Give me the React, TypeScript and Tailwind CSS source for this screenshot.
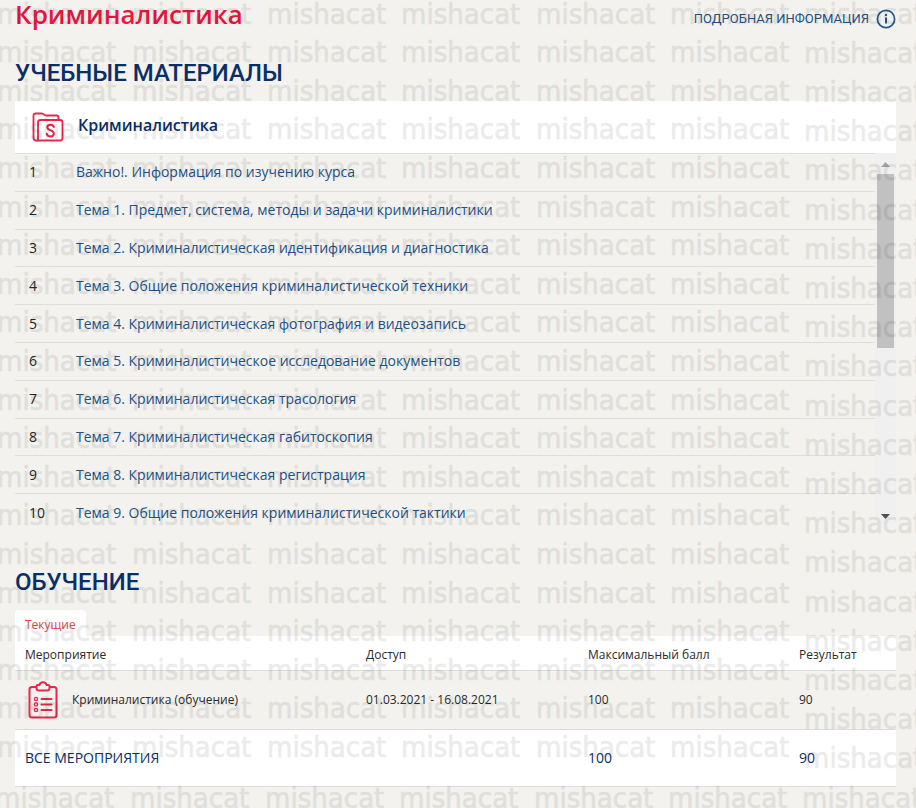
type Material = {
  id: number
  title: string
}

const MATERIALS: Material[] = [
  { id: 1, title: "Важно!. Информация по изучению курса" },
  { id: 2, title: "Тема 1. Предмет, система, методы и задачи криминалистики" },
  { id: 3, title: "Тема 2. Криминалистическая идентификация и диагностика" },
  { id: 4, title: "Тема 3. Общие положения криминалистической техники" },
  { id: 5, title: "Тема 4. Криминалистическая фотография и видеозапись" },
  { id: 6, title: "Тема 5. Криминалистическое исследование документов" },
  { id: 7, title: "Тема 6. Криминалистическая трасология" },
  { id: 8, title: "Тема 7. Криминалистическая габитоскопия" },
  { id: 9, title: "Тема 8. Криминалистическая регистрация" },
  { id: 10, title: "Тема 9. Общие положения криминалистической тактики" },
]

const MARK_COLUMNS = [-3, 132, 267, 401, 536, 670]

type Mark = { x: number; y: number }

function buildMarks(): Mark[] {
  const marks: Mark[] = []
  for (let row = 0; row < 20; row++) {
    for (const x of MARK_COLUMNS) {
      marks.push({ x, y: Math.floor(24 + row * 38.6) })
    }
    marks.push({ x: 804, y: Math.floor(24 + row * 39.2) })
  }
  for (const x of [...MARK_COLUMNS, 804]) {
    marks.push({ x: x - 2, y: 808 })
  }
  return marks
}

function Watermark() {
  return (
    <svg
      aria-hidden="true"
      className="pointer-events-none absolute inset-0 h-full w-full font-['DejaVu_Sans_Condensed','DejaVu_Sans',sans-serif] text-[29px] opacity-[0.075]"
      fill="#000"
      stroke="#000"
      strokeWidth="0.7"
    >
      {buildMarks().map((mark) => (
        <text key={mark.x + "-" + mark.y} x={mark.x} y={mark.y}>
          mishacat
        </text>
      ))}
    </svg>
  )
}

function InfoIcon() {
  return (
    <svg viewBox="0 0 20 20" className="h-5 w-5" fill="none" stroke="#1f5a90" aria-hidden="true">
      <circle cx="10" cy="10" r="8.6" strokeWidth="1.7" />
      <path d="M10 8.5V14.5" strokeWidth="2" />
      <path d="M10 5V7" strokeWidth="2" />
    </svg>
  )
}

function FolderIcon() {
  return (
    <svg
      viewBox="0 0 32 30"
      className="h-[30px] w-8"
      fill="none"
      stroke="#e8274b"
      strokeWidth="1.8"
      strokeLinejoin="round"
      strokeLinecap="round"
      aria-hidden="true"
    >
      <path d="M6 28.5H4Q1.5 28.5 1.5 26V3.5Q1.5 1.5 3.5 1.5H9.5Q11 1.5 12 2.7Q12.8 3.5 14 3.5H24.5Q26.5 3.5 26.5 5.5V8" />
      <path d="M6 28.5V10.5Q6 8 8.5 8H28Q30.5 8 30.5 10.5V26Q30.5 28.5 28 28.5Z" />
      <path
        d="M21.8 15Q21 12.8 18.3 12.8Q15.3 12.8 15.3 15.3Q15.3 17.3 18.4 18.2Q21.8 19.2 21.8 21.6Q21.8 24.5 18.5 24.5Q15.3 24.5 14.7 21.8"
        strokeWidth="2"
      />
    </svg>
  )
}

function ClipboardIcon() {
  return (
    <svg
      viewBox="0 0 30 38"
      className="h-[38px] w-[30px]"
      fill="none"
      stroke="#e8274b"
      strokeWidth="2"
      strokeLinejoin="round"
      strokeLinecap="round"
      aria-hidden="true"
    >
      <path d="M8 6H4Q1.5 6 1.5 8.5V34Q1.5 36.5 4 36.5H26Q28.5 36.5 28.5 34V8.5Q28.5 6 26 6H22" />
      <path d="M8.5 5Q8.5 4 10 4H11.5Q12 1.3 15 1.3Q18 1.3 18.5 4H20Q21.5 4 21.5 5V7Q21.5 9.5 19 9.5H11Q8.5 9.5 8.5 7Z" />
      <path d="M13.5 18H23.5M13.5 23.5H23.5M13.5 29H23.5" />
      <circle cx="8" cy="18" r="1.6" strokeWidth="1.3" />
      <circle cx="8" cy="23.5" r="1.6" strokeWidth="1.3" />
      <circle cx="8" cy="29" r="1.6" strokeWidth="1.3" />
    </svg>
  )
}

function ScrollTrack() {
  return (
    <div className="flex w-[21px] shrink-0 flex-col items-center bg-[#f0f0f1] pt-[9px] pb-[5px]" aria-hidden="true">
      <svg viewBox="0 0 9 5" className="h-[5px] w-[9px]" fill="#a3a3a3">
        <path d="M0 5L4.5 0L9 5Z" />
      </svg>
      <div className="mt-[7px] h-[174px] w-[17px] bg-[#c1c1c1]" />
      <svg viewBox="0 0 9 5" className="mt-auto h-[5px] w-[9px]" fill="#505050">
        <path d="M0 0L4.5 5L9 0Z" />
      </svg>
    </div>
  )
}

function Materials() {
  return (
    <section>
      <h2 className="mt-[25px] font-['Roboto',sans-serif] text-2xl font-medium text-[#0a2f66]">УЧЕБНЫЕ МАТЕРИАЛЫ</h2>
      <div className="mt-3 flex h-[52px] items-center bg-white px-[17px]">
        <FolderIcon />
        <h3 className="ml-[14px] pb-1 text-base font-semibold text-[#0a2f66]">Криминалистика</h3>
      </div>
      <div className="flex h-[371px] overflow-hidden">
        <ul className="grid h-[378px] grow auto-rows-fr text-sm">
          {MATERIALS.map((item) => (
            <li key={item.id} className="flex items-center border-t border-[#dededc] pl-[14px]">
              <span className="w-[47px] text-[#262626]">{item.id}</span>
              <a href="#" className="text-[#1f5288]">
                {item.title}
              </a>
            </li>
          ))}
        </ul>
        <ScrollTrack />
      </div>
    </section>
  )
}

function Training() {
  return (
    <section>
      <h2 className="mt-[42px] font-['Roboto',sans-serif] text-2xl font-medium text-[#0a2f66]">ОБУЧЕНИЕ</h2>
      <button type="button" className="mt-3 block h-[26px] rounded-t bg-white px-[10px] pt-[3px] text-xs text-[#e0484f]">
        Текущие
      </button>
      <table className="w-full table-fixed text-left text-xs text-[#2a2a2a]">
        <thead>
          <tr className="h-[34px] border-b border-[#dededc] bg-white">
            <th className="w-[341px] pt-1 pl-[10px] font-medium">Мероприятие</th>
            <th className="w-[222px] pt-1 pl-[10px] font-medium">Доступ</th>
            <th className="w-[211px] pt-1 pl-[10px] font-medium">Максимальный балл</th>
            <th className="pt-1 pl-[10px] font-medium">Результат</th>
          </tr>
        </thead>
        <tbody>
          <tr className="h-[59px] border-b border-[#dededc]">
            <td>
              <div className="flex items-center gap-[14px] pl-[13px]">
                <ClipboardIcon />
                <span>Криминалистика (обучение)</span>
              </div>
            </td>
            <td className="pl-[10px]">01.03.2021 - 16.08.2021</td>
            <td className="pl-[10px]">100</td>
            <td className="pl-[10px]">90</td>
          </tr>
        </tbody>
        <tfoot>
          <tr className="h-[57px] border-b border-[#dededc] bg-white text-sm text-[#0a2f66]">
            <td className="pl-[10px]">ВСЕ МЕРОПРИЯТИЯ</td>
            <td />
            <td className="pl-[10px] font-medium">100</td>
            <td className="pl-[10px] font-medium">90</td>
          </tr>
        </tfoot>
      </table>
    </section>
  )
}

export default function App() {
  return (
    <div className="relative min-h-screen overflow-hidden bg-[#f3f2ee] pr-5 pl-[15px] font-['Open_Sans',sans-serif]">
      <header className="flex h-8 items-start justify-between">
        <h1 className="text-[26px] leading-7 font-semibold text-[#e8173f]">Криминалистика</h1>
        <a href="#" className="mt-[9px] flex items-center gap-[7px] font-['Roboto',sans-serif] text-[13px] text-[#1f5288]">
          ПОДРОБНАЯ ИНФОРМАЦИЯ
          <InfoIcon />
        </a>
      </header>
      <main>
        <Materials />
        <Training />
      </main>
      <Watermark />
    </div>
  )
}
